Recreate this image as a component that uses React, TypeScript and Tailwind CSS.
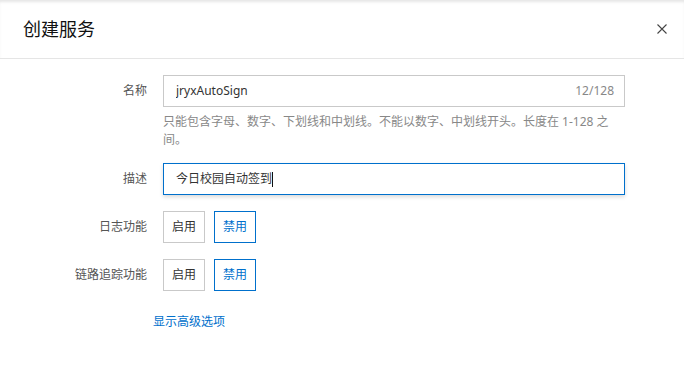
import { useState } from "react";

const font = { fontFamily: '"Noto Sans", "Noto Sans CJK SC", sans-serif' };

function Toggle({ value, onChange }: { value: boolean; onChange: (v: boolean) => void }) {
  return (
    <div className="flex gap-[9px]">
      <button
        type="button"
        onClick={() => onChange(true)}
        className={
          value
            ? "w-[42px] h-[32px] border border-[#0070cc] text-[#0070cc] text-[12px] bg-white"
            : "w-[42px] h-[32px] border border-[#c9c9c9] text-[#333] text-[12px] bg-white"
        }
      >
        启用
      </button>
      <button
        type="button"
        onClick={() => onChange(false)}
        className={
          !value
            ? "w-[42px] h-[32px] border border-[#0070cc] text-[#0070cc] text-[12px] bg-white"
            : "w-[42px] h-[32px] border border-[#c9c9c9] text-[#333] text-[12px] bg-white"
        }
      >
        禁用
      </button>
    </div>
  );
}

export default function App() {
  const [name, setName] = useState("jryxAutoSign");
  const [desc, setDesc] = useState("今日校园自动签到");
  const [logOn, setLogOn] = useState(false);
  const [traceOn, setTraceOn] = useState(false);

  return (
    <div className="w-[684px] h-[377px] bg-white overflow-hidden" style={font}>
      {/* header */}
      <div className="h-[59px] flex items-center justify-between pl-[23px] pr-[12px] border-b border-[#e5e5e5] shadow-[inset_0_3px_3px_-1px_rgba(0,0,0,0.1)]">
        <h1 className="text-[18px] text-[#111] font-normal">创建服务</h1>
        <button type="button" className="w-[10px] h-[10px] mr-[5px] flex items-center justify-center">
          <svg width="10" height="10" viewBox="0 0 10 10" fill="none" stroke="#444" strokeWidth="1.1">
            <path d="M0.5 0.5 L9.5 9.5 M9.5 0.5 L0.5 9.5" />
          </svg>
        </button>
      </div>

      {/* form */}
      <div className="pt-[16px] flex flex-col">
        <div className="flex items-start">
          <label className="w-[147px] h-[32px] flex items-center justify-end text-[12px] text-[#555]">名称</label>
          <div className="ml-[16px] w-[462px]">
            <div className="h-[32px] border border-[#c9c9c9] flex items-center pl-[12px] pr-[10px]">
              <input
                value={name}
                onChange={(e) => setName(e.target.value)}
                className="flex-1 outline-none text-[12px] text-[#333] bg-transparent"
              />
              <span className="text-[12px] text-[#888]">{name.length}/128</span>
            </div>
            <p className="mt-[6px] text-[12px] leading-[18px] text-[#888]">
              只能包含字母、数字、下划线和中划线。不能以数字、中划线开头。长度在 1-128 之间。
            </p>
          </div>
        </div>

        <div className="flex items-center mt-[14px]">
          <label className="w-[147px] flex justify-end text-[12px] text-[#555]">描述</label>
          <div className="ml-[16px] w-[462px] h-[32px] border border-[#0070cc] shadow-[0_2px_4px_rgba(0,0,0,0.15)] flex items-center pl-[12px]">
            <input
              value={desc}
              onChange={(e) => setDesc(e.target.value)}
              className="w-[96px] outline-none text-[12px] text-[#333] bg-transparent"
            />
            <span className="w-px h-[15px] bg-[#111]" />
          </div>
        </div>

        <div className="flex items-center mt-[16px]">
          <label className="w-[147px] flex justify-end text-[12px] text-[#555]">日志功能</label>
          <div className="ml-[16px]">
            <Toggle value={logOn} onChange={setLogOn} />
          </div>
        </div>

        <div className="flex items-center mt-[16px]">
          <label className="w-[147px] flex justify-end text-[12px] text-[#555]">链路追踪功能</label>
          <div className="ml-[16px]">
            <Toggle value={traceOn} onChange={setTraceOn} />
          </div>
        </div>

        <div className="mt-[17px] pl-[153px]">
          <a href="#" className="text-[12px] leading-[18px] text-[#0070cc]">显示高级选项</a>
        </div>
      </div>
    </div>
  );
}
